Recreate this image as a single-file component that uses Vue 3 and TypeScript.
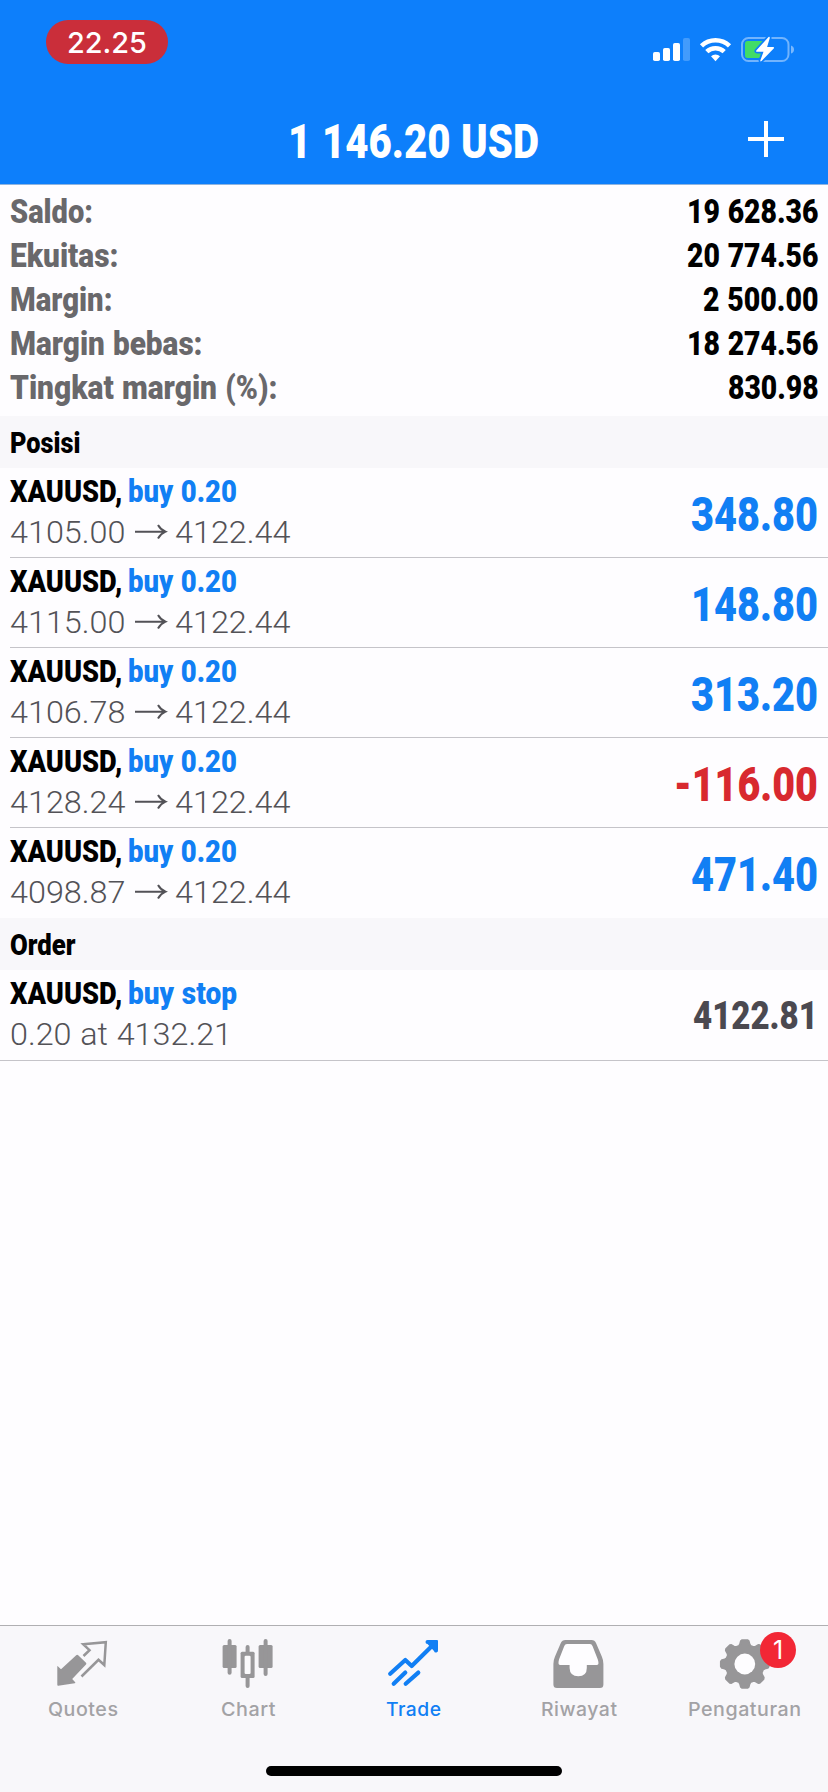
<script setup lang="ts">
import { h, type VNode } from 'vue'

interface FitProps {
  text: string
  w: number
  tall: number
  base: number
}

// One line of real text, condensed to an exact advance width.
const FitText = (p: FitProps) =>
  h('svg', { width: p.w, height: p.tall, overflow: 'visible' }, [
    h('text', {
      x: 0,
      y: p.base,
      fill: 'currentColor',
      onVnodeMounted(node: VNode) {
        const el = node.el as SVGTextElement
        el.setAttribute('transform', `scale(${p.w / el.getComputedTextLength()} 1)`)
      },
    }, p.text),
  ])
FitText.props = ['text', 'w', 'tall', 'base']

const summary = [
  { label: 'Saldo:', lw: 83, value: '19 628.36', vw: 131.5 },
  { label: 'Ekuitas:', lw: 108.5, value: '20 774.56', vw: 131.5 },
  { label: 'Margin:', lw: 102.5, value: '2 500.00', vw: 115.5 },
  { label: 'Margin bebas:', lw: 192.5, value: '18 274.56', vw: 131.5 },
  { label: 'Tingkat margin (%):', lw: 267.5, value: '830.98', vw: 90.5 },
]

const positions = [
  { open: '4105.00', profit: '348.80', w: 127 },
  { open: '4115.00', profit: '148.80', w: 127 },
  { open: '4106.78', profit: '313.20', w: 127 },
  { open: '4128.24', profit: '-116.00', w: 144 },
  { open: '4098.87', profit: '471.40', w: 127 },
]

const tabs = [
  { id: 'quotes', label: 'Quotes', w: 70.5 },
  { id: 'chart', label: 'Chart', w: 55 },
  { id: 'trade', label: 'Trade', w: 55.5 },
  { id: 'history', label: 'Riwayat', w: 76.5 },
  { id: 'settings', label: 'Pengaturan', w: 113.5 },
]

function gearPath(cx: number, cy: number): string {
  const pts: string[] = []
  const profile: [number, number][] = [[-17, 19], [-13, 20.5], [-9.5, 23.2], [-6, 24], [6, 24], [9.5, 23.2], [13, 20.5], [17, 19]]
  for (let i = 0; i < 8; i++) {
    for (const [deg, r] of profile) {
      const a = ((i * 45 + deg) * Math.PI) / 180
      pts.push(`${(cx + r * Math.sin(a)).toFixed(2)} ${(cy - r * Math.cos(a)).toFixed(2)}`)
    }
  }
  return `M${pts.join('L')}Z`
}
const gear = gearPath(25.8, 26)
</script>

<template>
  <div class="screen">
    <header class="top">
      <div class="status">
        <div class="clock"><FitText text="22.25" :w="80" :tall="43" :base="32.7" /></div>
        <svg class="indicators" width="142" height="27" viewBox="0 0 142 27">
          <g fill="#fff">
            <rect x="0" y="16" width="7" height="9" rx="1.8" />
            <rect x="10" y="12" width="7" height="13" rx="1.8" />
            <rect x="20" y="7" width="7" height="18" rx="1.8" />
            <rect x="30" y="2" width="7" height="23" rx="1.8" opacity=".22" />
          </g>
          <g fill="none" stroke="#fff" stroke-width="4.6">
            <path d="M48.5 9.8a20.3 20.3 0 0 1 28 0" />
            <path d="M53.8 15.7a12.6 12.6 0 0 1 17.4 0" />
          </g>
          <path d="M58 20.2a6.8 6.8 0 0 1 9 0l-4.5 5z" fill="#fff" />
          <rect x="89" y="2" width="46.5" height="23" rx="6.5" fill="none" stroke="#fff" stroke-opacity=".42" stroke-width="2" />
          <path d="M138 9.5q3 1 3 4t-3 4z" fill="#fff" opacity=".45" />
          <path d="M94.500 5H110L104 14q-1 2 1 2.400L109 17 106.500 22H94.500a2.500 2.500 0 0 1-2.500-2.500V7.500a2.500 2.500 0 0 1 2.500-2.500z" fill="#41dc67" />
          <path d="M115.500 1L103.500 14.300q-1 1.400.6 1.400H110.500L107.300 24.500q0 1.700 1.300.5L120.700 12.600q1-1.500-.6-1.500H114.100L116.800 2q0-1.600-1.300-1z" fill="#fff" stroke="#0d7ffb" stroke-width="3.500" paint-order="stroke" />
        </svg>
      </div>
      <div class="title">
        <FitText text="1 146.20 USD" :w="251" :tall="90" :base="64" />
        <svg class="plus" width="36" height="36" viewBox="0 0 36 36">
          <path d="M18 0v36M0 18h36" stroke="#fff" stroke-width="4" />
        </svg>
      </div>
    </header>

    <section class="summary">
      <div v-for="s in summary" :key="s.label" class="summary-row">
        <FitText class="caption" :text="s.label" :w="s.lw" :tall="44" :base="36" />
        <FitText :text="s.value" :w="s.vw" :tall="44" :base="36" />
      </div>
    </section>

    <h2 class="section-head"><FitText text="Posisi" :w="70.5" :tall="52" :base="37" /></h2>
    <div v-for="p in positions" :key="p.open" class="deal">
      <div class="deal-info">
        <div class="symbol">
          <FitText text="XAUUSD," :w="112.5" :tall="45" :base="34" />
          <FitText class="buy" text="buy 0.20" :w="109" :tall="45" :base="34" />
        </div>
        <div class="prices">
          <FitText :text="p.open" :w="115.5" :tall="45" :base="30" />
          <svg class="arrow" width="31" height="45" viewBox="0 0 31 45">
            <path d="M0 18.700H29.500M23 12q2.500 4.500 7.500 6.700-5 2.200-7.500 6.700" fill="none" stroke="currentColor" stroke-width="2" />
          </svg>
          <FitText text="4122.44" :w="115.5" :tall="45" :base="30" />
        </div>
      </div>
      <FitText class="profit" :class="{ loss: p.profit.startsWith('-') }" :text="p.profit" :w="p.w" :tall="89" :base="63" />
    </div>

    <h2 class="section-head"><FitText text="Order" :w="65.500" :tall="52" :base="37" /></h2>
    <div class="deal order">
      <div class="deal-info">
        <div class="symbol">
          <FitText text="XAUUSD," :w="112.5" :tall="45" :base="34" />
          <FitText class="buy" text="buy stop" :w="109" :tall="45" :base="34" />
        </div>
        <div class="prices"><FitText text="0.20 at 4132.21" :w="222" :tall="45" :base="30" /></div>
      </div>
      <FitText class="market" text="4122.81" :w="125" :tall="90" :base="59" />
    </div>

    <nav class="tabs">
      <div v-for="t in tabs" :key="t.id" class="tab" :class="{ active: t.id === 'trade' }">
        <div class="icon">
          <svg v-if="t.id === 'quotes'" width="52" height="52" viewBox="0 0 52 52">
            <path d="M.8 28.200L4 31.300 19.200 17.200q1-.9 2 0L29 24.800q.8.900 0 1.800L15.200 41 18.200 44.300q.5.800-.5 1L1.300 47.700q-1 .1-1-1V28.600q0-.9.5-.4z" fill="currentColor" />
            <path d="M26.500 18L32.500 12.200 26.200 6.200 48.800 4.200 47.300 27 41.500 21.800 24.500 38.500" fill="none" stroke="currentColor" stroke-width="2.500" />
          </svg>
          <svg v-else-if="t.id === 'chart'" width="52" height="52" viewBox="0 0 52 52">
            <g fill="currentColor">
              <rect x=".6" y="7" width="14" height="23" rx="1.500" />
              <rect x="5.600" y="1" width="4" height="35.700" rx="2" />
              <rect x="36.600" y="7" width="14" height="23" rx="1.500" />
              <rect x="41.600" y="1" width="4" height="37" rx="2" />
              <rect x="18.600" y="13.700" width="14" height="26.300" rx="1.500" />
              <rect x="23.600" y="7" width="4" height="43" rx="2" />
            </g>
            <rect x="22.600" y="17.700" width="6" height="18.300" rx="1.200" fill="#fbfafc" />
          </svg>
          <svg v-else-if="t.id === 'trade'" width="52" height="52" viewBox="0 0 52 52">
            <g fill="none" stroke="currentColor" stroke-width="4.200" stroke-linecap="round" stroke-linejoin="round">
              <path d="M2.200 35.800L17.300 22 23.700 28 46 6" />
              <path d="M5.700 45.800L17.300 34.600M17.700 45.800L30.300 34.600" />
            </g>
            <path d="M39.500 2H49q1 0 1 1v9a2 2 0 0 1-4 1L39.500 6a2 2 0 0 1 0-4z" fill="currentColor" />
          </svg>
          <svg v-else-if="t.id === 'history'" width="52" height="52" viewBox="0 0 52 52">
            <path d="M11.500 2H37.500Q40.800 2 42 5L47.800 18.500Q49.400 22 49.400 26V46.500Q49.400 50 46 50H3Q-.6 50-.6 46.500V26Q-.6 22 1 18.500L6.800 5Q8 2 11.500 2z" fill="currentColor" />
            <path d="M13 6H36Q37.800 6 38.500 8L43.800 21.500Q44.800 24.500 44.400 26 44 27 42.500 27H32.800V30Q32.800 38.200 24.300 38.200T15.600 30V27H6.500Q5 27 4.600 26 4.200 24.500 5 21.500L10.300 8Q11 6 13 6z" fill="#fefdff" />
          </svg>
          <svg v-else width="52" height="52" viewBox="0 0 52 52">
            <path :d="gear" fill="currentColor" stroke="currentColor" stroke-width="2" stroke-linejoin="round" />
            <circle cx="25.800" cy="26" r="10.400" fill="#fefdff" />
          </svg>
          <span v-if="t.id === 'settings'" class="badge">1</span>
        </div>
        <FitText class="tab-label" :text="t.label" :w="t.w" :tall="30" :base="26" />
      </div>
      <div class="home-bar"></div>
    </nav>
  </div>
</template>

<style scoped>
.screen {
  display: flex;
  flex-direction: column;
  width: 828px;
  height: 1792px;
  overflow: hidden;
  background: #fefdff;
  color: #000;
  font-family: Roboto, 'Liberation Sans', sans-serif;
  font-weight: 900;
  word-spacing: 0.05em;
}
svg {
  display: block;
  flex: none;
  overflow: visible;
}
.top {
  height: 184px;
  background: #0d7ffb;
  border-bottom: 1px solid #8fb4df;
  color: #fff;
}
.status {
  display: flex;
  justify-content: space-between;
  height: 94px;
}
.clock {
  display: flex;
  justify-content: center;
  width: 122px;
  height: 44px;
  margin: 20px 0 0 46px;
  border-radius: 22px;
  background: #ca2e3a;
  font: 450 29px Inter, sans-serif;
}
.indicators {
  margin: 36px 33px 0 0;
}
.title {
  display: grid;
  grid-template-columns: 1fr auto 1fr;
  height: 90px;
  font-size: 47.5px;
}
.title > :first-child {
  grid-column: 2;
  margin-right: 2px;
}
.plus {
  justify-self: end;
  margin: 27px 44px 0 0;
}
.summary {
  padding: 2px 10px 9px;
  font-size: 33.7px;
}
.summary-row {
  display: flex;
  justify-content: space-between;
  height: 44px;
}
.caption {
  color: #69686b;
}
.section-head {
  margin: 0;
  padding: 0 10px;
  height: 52px;
  background: #f8f7fa;
  font-size: 29.5px;
  font-weight: 900;
}
.deal {
  display: flex;
  justify-content: space-between;
  box-sizing: border-box;
  height: 90px;
  margin-left: 10px;
  padding-right: 10px;
  border-bottom: 1px solid #c5c4c9;
}
.deal:has(+ .section-head) {
  border-bottom: 0;
}
.order {
  height: 91px;
  margin-left: 0;
  padding-left: 10px;
}
.symbol {
  display: flex;
  gap: 5.5px;
  font-size: 32.2px;
}
.buy,
.profit {
  color: #117ff4;
}
.prices {
  display: flex;
  color: #535257;
  font-size: 31.2px;
  font-weight: 300;
}
.arrow {
  margin: 0 9px;
}
.profit {
  font-size: 48px;
}
.loss {
  color: #d8292f;
}
.market {
  color: #4b4950;
  font-size: 39.5px;
}
.tabs {
  position: relative;
  display: grid;
  grid-template-columns: repeat(5, 1fr);
  box-sizing: border-box;
  height: 167px;
  margin-top: auto;
  padding-top: 12px;
  border-top: 1px solid #b0afb2;
  background: #f8f7fa;
  color: #979698;
}
.tab {
  display: flex;
  flex-direction: column;
  align-items: center;
}
.icon {
  position: relative;
  width: 52px;
  height: 52px;
}
.tab-label {
  color: #a3a2a5;
  font: 450 18.800px Inter, sans-serif;
  letter-spacing: 0.5px;
}
.active,
.active .tab-label {
  color: #117ff4;
}
.badge {
  position: absolute;
  left: 41px;
  top: -6px;
  width: 36px;
  height: 36px;
  border-radius: 50%;
  background: #f22735;
  color: #fff;
  font: 400 25px/36px Inter, sans-serif;
  text-align: center;
}
.home-bar {
  position: absolute;
  left: 266px;
  bottom: 16px;
  width: 296px;
  height: 10px;
  border-radius: 5px;
  background: #000;
}
</style>
